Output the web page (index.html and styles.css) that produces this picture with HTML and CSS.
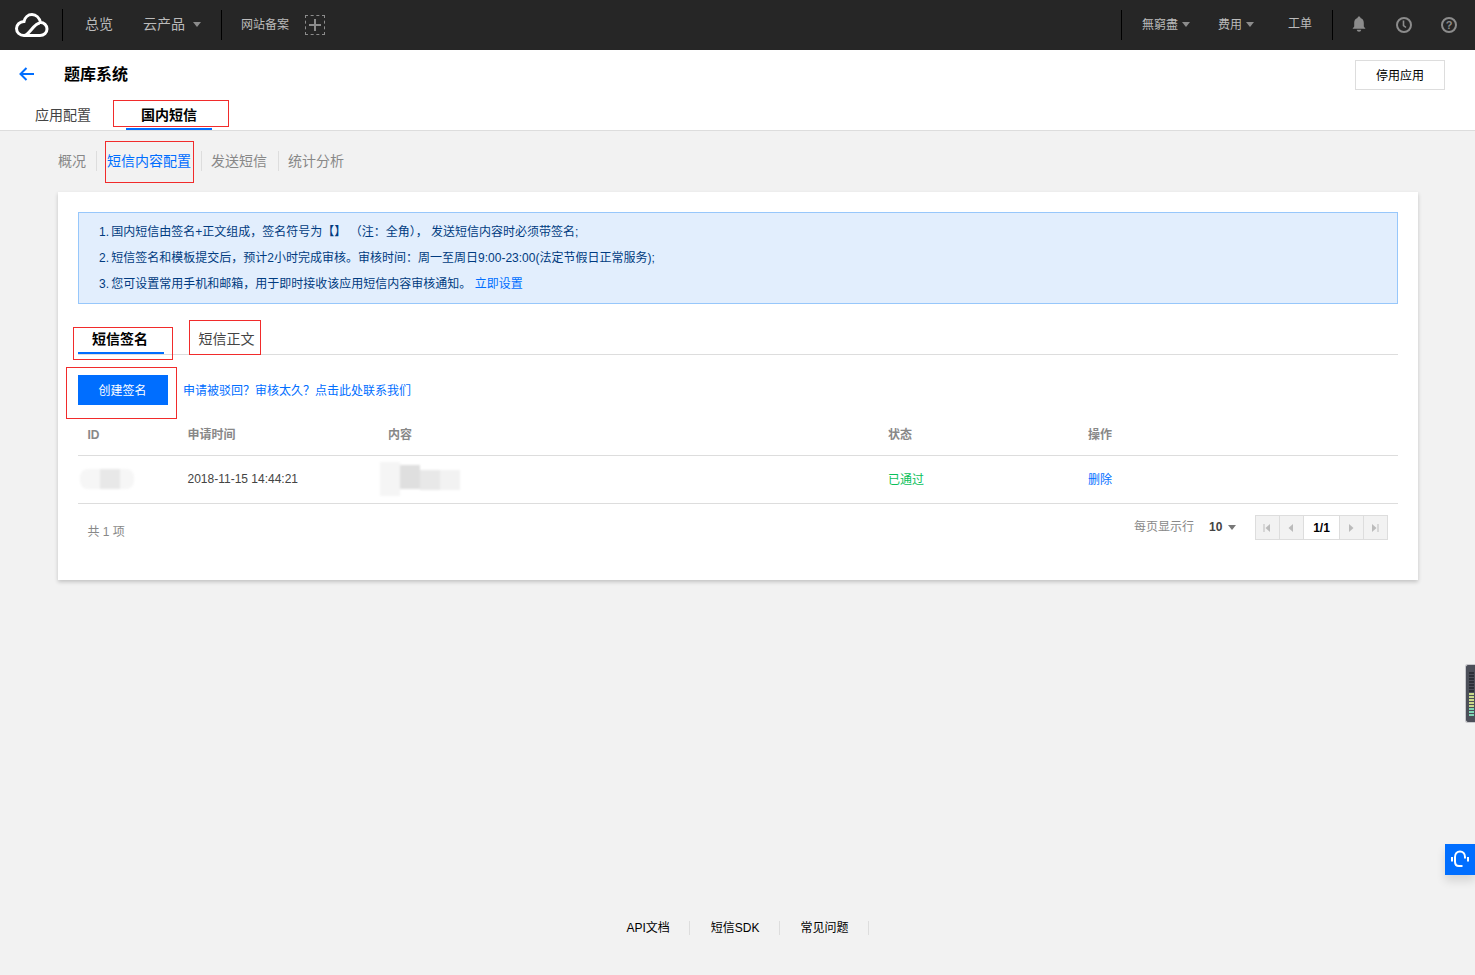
FILE: index.html
```html
<!DOCTYPE html>
<html>
  <head>
    <title>题库系统</title>
    <link rel="stylesheet" href="styles.css">
  </head>
  <body>
    <div class="topbar">
      <div class="logo-cell">
        <svg class="logo" width="34" height="24" viewBox="0 0 34 24" fill="none" stroke="#fff" stroke-width="3">
          <path d="M9 22.500H25C29 22.500 32 19.600 32 16C32 12.400 29 9.500 25.500 9.500C24.500 4.800 21 1.500 17 1.500C13 1.500 9.800 4.500 9 8.500C4.800 8.500 1.500 11.800 1.500 15.500C1.500 19.500 4.800 22.500 9 22.500C14 22.500 19 10 25 10"/>
        </svg>
      </div>
      <a class="top-link top-first">总览</a>
      <a class="top-link top-products">云产品<i class="caret"></i></a>
      <div class="top-sep"></div>
      <a class="top-link top-record">网站备案</a>
      <div class="add-box"><span class="add-h"></span><span class="add-v"></span></div>
      <div class="top-right">
        <div class="top-sep"></div>
        <a class="top-link top-user">無窮盡<i class="caret"></i></a>
        <a class="top-link top-fee">费用<i class="caret"></i></a>
        <a class="top-link top-order">工单</a>
        <div class="top-sep"></div>
        <svg class="top-icon bell" width="16" height="16" viewBox="0 0 16 16" fill="#8c8c8c">
          <path d="M8 0.500C9 0.500 9.500 1.100 9.500 2C11.800 2.700 12.800 4.500 12.800 7V10.500L14.500 12.800H1.500L3.200 10.500V7C3.200 4.500 4.200 2.700 6.500 2C6.500 1.100 7 0.500 8 0.500Z"/>
          <path d="M5.800 13.700H10.200C10.200 15 9.200 15.700 8 15.700C6.800 15.700 5.800 15 5.800 13.700Z"/>
        </svg>
        <svg class="top-icon clock" width="16" height="16" viewBox="0 0 16 16" fill="none" stroke="#8c8c8c" stroke-width="2">
          <circle cx="8" cy="8" r="7"/>
          <path d="M7.500 3.500V8.500L10 10.500" stroke-width="1.600"/>
        </svg>
        <div class="help">?</div>
      </div>
    </div>

    <div class="page-head">
      <div class="title-row">
        <svg class="back" width="16" height="14" viewBox="0 0 16 14" fill="none" stroke="#006eff" stroke-width="2">
          <path d="M15 7H2M7.500 1L1.500 7L7.500 13"/>
        </svg>
        <h1 class="app-title">题库系统</h1>
        <button class="stop-btn">停用应用</button>
      </div>
      <div class="app-tabs">
        <a class="app-tab">应用配置</a>
        <a class="app-tab active">国内短信</a>
        <span class="mark mark-app-tab"></span>
      </div>
    </div>

    <div class="main">
      <div class="subnav">
        <a class="sub-item">概况</a>
        <a class="sub-item active">短信内容配置<span class="mark mark-sub"></span></a>
        <a class="sub-item send">发送短信</a>
        <a class="sub-item">统计分析</a>
      </div>

      <div class="card">
        <div class="notice">
          <p><span class="num">1.</span> 国内短信由签名+正文组成，签名符号为【】&nbsp;（注：全角），&nbsp;发送短信内容时必须带签名;</p>
          <p><span class="num">2.</span> 短信签名和模板提交后，预计2小时完成审核。审核时间：周一至周日9:00-23:00(法定节假日正常服务);</p>
          <p><span class="num">3.</span> 您可设置常用手机和邮箱，用于即时接收该应用短信内容审核通知。 <a class="link">立即设置</a></p>
        </div>

        <div class="inner-tabs">
          <a class="inner-tab active">短信签名<span class="mark mark-sign"></span></a>
          <a class="inner-tab second">短信正文<span class="mark mark-body"></span></a>
        </div>

        <div class="actions">
          <button class="create-btn">创建签名<span class="mark mark-create"></span></button>
          <a class="link action-link">申请被驳回？审核太久？点击此处联系我们</a>
        </div>

        <div class="row head-row">
          <div class="col-id">ID</div>
          <div class="col-time">申请时间</div>
          <div class="col-content">内容</div>
          <div class="col-status">状态</div>
          <div class="col-op">操作</div>
        </div>
        <div class="row data-row">
          <div class="col-id"><div class="blur blur-id"><i></i></div></div>
          <div class="col-time">2018-11-15 14:44:21</div>
          <div class="col-content"><div class="blur blur-content"><i></i><i></i><i></i><i></i></div></div>
          <div class="col-status passed">已通过</div>
          <div class="col-op"><a class="link">删除</a></div>
        </div>

        <div class="table-foot">
          <div class="total">共 1 项</div>
          <div class="per-page">每页显示行</div>
          <div class="per-num">10<i class="caret dark"></i></div>
          <div class="pager">
            <span class="pg-btn"><svg width="8" height="8" viewBox="0 0 8 8" fill="#bbb"><path d="M0.500 0H1.500V8H0.500ZM7 0V8L2.500 4Z"/></svg></span>
            <span class="pg-btn"><svg width="8" height="8" viewBox="0 0 8 8" fill="#bbb"><path d="M6 0V8L1.500 4Z"/></svg></span>
            <span class="pg-num">1/1</span>
            <span class="pg-btn"><svg width="8" height="8" viewBox="0 0 8 8" fill="#bbb"><path d="M2 0V8L6.500 4Z"/></svg></span>
            <span class="pg-btn"><svg width="8" height="8" viewBox="0 0 8 8" fill="#bbb"><path d="M1 0V8L5.500 4ZM6.500 0H7.500V8H6.500Z"/></svg></span>
          </div>
        </div>
      </div>
    </div>

    <div class="footer">
      <a>API文档</a>
      <a>短信SDK</a>
      <a>常见问题</a>
    </div>

    <div class="meter">
      <i></i><i></i><i></i><i></i><i></i><i></i><i></i>
      <i class="yellow"></i><i class="yellow"></i><i class="yellow"></i><i class="yellow"></i><i class="yellow"></i>
      <i class="green"></i><i class="green"></i><i class="green"></i>
    </div>
    <div class="support">
      <svg width="20" height="20" viewBox="0 0 20 20" fill="none" stroke="#fff" stroke-width="2">
        <path d="M15 8.500V7C15 3.500 12.800 1.500 10 1.500C7.200 1.500 5 3.500 5 7V11.500C5 14 6.500 16 9 16H12.500"/>
        <path d="M1 7H3V11.500H1ZM17 7H19V11.500H17Z" fill="#fff" stroke="none"/>
      </svg>
    </div>
  </body>
</html>
```

FILE: styles.css
```css
* {
  box-sizing: border-box;
}
body {
  margin: 0;
  min-height: 975px;
  display: flex;
  flex-direction: column;
  background: #f2f2f2;
  color: #444;
  font-family: "Liberation Sans", "Noto Sans CJK SC", sans-serif;
  font-size: 12px;
  overflow: hidden;
}
.mark {
  position: absolute;
  border: 1px solid #f12b2b;
  pointer-events: none;
}

/* top bar */
.topbar {
  height: 50px;
  display: flex;
  align-items: center;
  background: #262626;
  color: #bbb;
  flex-shrink: 0;
}
.logo-cell {
  width: 63px;
  height: 32px;
  padding-left: 15px;
  padding-top: 4px;
  border-right: 1px solid #000;
  flex-shrink: 0;
}
.logo {
  display: block;
}
.top-link {
  padding-bottom: 4px;
  font-size: 14px;
  white-space: nowrap;
  color: #bbb;
}
.top-first {
  margin-left: 22px;
}
.top-products {
  margin-left: 30px;
  margin-right: 20px;
}
.top-record {
  margin-left: 19px;
  font-size: 12px;
}
.top-sep {
  width: 1px;
  height: 30px;
  background: #000;
  flex-shrink: 0;
}
.caret {
  display: inline-block;
  width: 0;
  height: 0;
  margin-left: 8px;
  vertical-align: 2px;
  border-top: 5px solid #8c8c8c;
  border-left: 4px solid transparent;
  border-right: 4px solid transparent;
}
.caret.dark {
  border-top-color: #777;
  margin-left: 6px;
  vertical-align: 1px;
}
.add-box {
  position: relative;
  width: 20px;
  height: 20px;
  margin-left: 16px;
  border: 1px dashed #8c8c8c;
}
.add-h,
.add-v {
  position: absolute;
  background: #8c8c8c;
}
.add-h {
  left: 3px;
  top: 8px;
  width: 12px;
  height: 2px;
}
.add-v {
  left: 8px;
  top: 3px;
  width: 2px;
  height: 12px;
}
.top-right {
  margin-left: auto;
  display: flex;
  align-items: center;
}
.top-user {
  margin-left: 20px;
  font-size: 12px;
}
.top-user .caret,
.top-fee .caret {
  margin-left: 4px;
}
.top-fee {
  margin-left: 28px;
  font-size: 12px;
}
.top-order {
  margin-left: 34px;
  margin-right: 20px;
  font-size: 12px;
  position: relative;
  top: -1px;
}
.top-icon {
  flex-shrink: 0;
}
.bell {
  margin-left: 18px;
  position: relative;
  top: -1px;
}
.clock {
  margin-left: 29px;
}
.help {
  width: 16px;
  height: 16px;
  margin-left: 29px;
  margin-right: 18px;
  border: 2px solid #8c8c8c;
  border-radius: 50%;
  color: #8c8c8c;
  font-size: 11px;
  font-weight: bold;
  line-height: 12px;
  text-align: center;
}

/* white page head */
.page-head {
  position: relative;
  height: 81px;
  background: #fff;
  border-bottom: 1px solid #ddd;
  flex-shrink: 0;
}
.title-row {
  height: 50px;
  display: flex;
  align-items: center;
  padding-left: 19px;
  padding-right: 30px;
}
.back {
  flex-shrink: 0;
  margin-bottom: 2px;
}
.app-title {
  margin: 0 0 4px 29px;
  font-size: 16px;
  font-weight: bold;
  color: #000;
}
.stop-btn {
  margin-left: auto;
  width: 90px;
  height: 30px;
  padding: 0 0 2px;
  background: #fff;
  border: 1px solid #ddd;
  color: #000;
  font: inherit;
}
.app-tabs {
  display: flex;
  padding-left: 35px;
}
.app-tab {
  font-size: 14px;
  color: #444;
  height: 30px;
  line-height: 30px;
}
.app-tab.active {
  margin-left: 35px;
  width: 86px;
  text-align: center;
  color: #000;
  font-weight: bold;
  border-bottom: 2px solid #006eff;
}
.mark-app-tab {
  left: 113px;
  top: 50px;
  width: 116px;
  height: 27px;
}

/* content */
.main {
  padding: 0 57px 0 58px;
}
.subnav {
  display: flex;
  align-items: center;
  height: 61px;
  padding-bottom: 2px;
}
.sub-item {
  position: relative;
  font-size: 14px;
  color: #888;
  padding: 0 10px;
  line-height: 20px;
  border-right: 1px solid #ddd;
}
.sub-item:first-child {
  padding-left: 0;
}
.sub-item:last-child {
  padding-left: 9px;
  border-right: 0;
}
.sub-item.active {
  color: #006eff;
}
.sub-item.send {
  padding: 0 11px 0 9px;
}
.mark-sub {
  left: 8px;
  top: -10px;
  width: 89px;
  height: 42px;
}
.card {
  height: 388px;
  padding: 20px;
  background: #fff;
  box-shadow: 0 2px 4px rgba(0, 0, 0, 0.2);
}
.notice {
  height: 92px;
  padding: 6px 20px;
  background: #e2eefd;
  border: 1px solid #97c7fb;
  color: #003b80;
}
.notice p {
  margin: 0;
  line-height: 26px;
}
.num {
  margin-right: -1px;
}
.link {
  color: #006eff;
}
.inner-tabs {
  display: flex;
  height: 51px;
  border-bottom: 1px solid #ddd;
}
.inner-tab {
  position: relative;
  width: 86px;
  height: 25px;
  margin-top: 25px;
  margin-right: 25px;
  text-align: center;
  font-size: 14px;
  line-height: 20px;
  color: #444;
}
.inner-tab.second {
  width: 75px;
}
.inner-tab.active {
  padding-right: 2px;
  color: #000;
  font-weight: bold;
  border-bottom: 2px solid #006eff;
}
.mark-sign {
  left: -5px;
  top: -2px;
  width: 100px;
  height: 33px;
}
.mark-body {
  left: 0;
  top: -9px;
  width: 72px;
  height: 35px;
}
.actions {
  display: flex;
  align-items: center;
  height: 30px;
  margin-top: 20px;
}
.create-btn {
  position: relative;
  width: 90px;
  height: 30px;
  margin-right: 15px;
  padding: 0 1px 2px 0;
  background: #006eff;
  border: 0;
  color: #fff;
  font: inherit;
}
.mark-create {
  left: -12px;
  top: -8px;
  width: 111px;
  height: 52px;
}
.action-link {
  padding-bottom: 2px;
}
.row {
  display: flex;
  align-items: center;
  border-bottom: 1px solid #ddd;
}
.head-row {
  height: 51px;
  padding-top: 6px;
  color: #888;
  font-weight: bold;
}
.head-row .col-id {
  padding-top: 4px;
}
.data-row {
  height: 48px;
  padding-bottom: 2px;
  color: #444;
}
.col-id {
  width: 100px;
  padding-left: 9.5px;
}
.col-time {
  width: 200px;
  padding-left: 9.5px;
}
.col-content {
  width: 500px;
  padding-left: 10px;
}
.col-status {
  width: 200px;
  padding-left: 10px;
}
.col-op {
  padding-left: 10px;
}
.passed {
  color: #0abf5b;
}
.blur {
  display: flex;
  filter: blur(0.8px);
}
.blur-id {
  width: 54px;
  height: 20px;
  margin-left: -7.5px;
  border-radius: 8px;
  background: #f6f6f6;
}
.blur-id i {
  width: 20px;
  margin-left: 20px;
  background: #e8e8e8;
}
.blur-content {
  width: 80px;
  height: 34px;
  margin-left: -8px;
  align-items: flex-start;
  border-radius: 0 8px 8px 0;
}
.blur-content i {
  width: 20px;
  height: 20px;
  margin-top: 8px;
  background: #f2f2f2;
}
.blur-content i:nth-child(1) {
  height: 34px;
  margin-top: 0;
  background: #f5f5f5;
}
.blur-content i:nth-child(2) {
  height: 24px;
  margin-top: 3px;
  background: #dfdfdf;
}
.blur-content i:nth-child(3) {
  background: #e8e8e8;
}
.table-foot {
  display: flex;
  align-items: flex-start;
  padding: 11px 10px 0 9.5px;
}
.total {
  margin-top: 7px;
  color: #888;
}
.per-page {
  margin-left: auto;
  margin-top: 2px;
  color: #888;
}
.per-num {
  width: 46px;
  margin-left: 15px;
  margin-top: 5px;
  font-weight: bold;
  color: #444;
}
.pager {
  display: flex;
  height: 25px;
  border: 1px solid #ddd;
}
.pg-btn {
  display: flex;
  align-items: center;
  justify-content: center;
  width: 24px;
  padding-right: 2px;
  background: #f2f2f2;
  border-right: 1px solid #ddd;
}
.pg-btn:last-child {
  width: 23px;
  border-right: 0;
}
.pg-num {
  width: 36px;
  border-right: 1px solid #ddd;
  color: #000;
  font-weight: bold;
  line-height: 24px;
  text-align: center;
}

/* footer */
.footer {
  margin-top: auto;
  margin-bottom: 40px;
  display: flex;
  justify-content: center;
  color: #000;
  padding-right: 1px;
}
.footer a {
  padding: 0 19px 0 21px;
  border-right: 1px solid #ddd;
  line-height: 14px;
}

/* floating widgets */
.meter {
  position: fixed;
  right: 0;
  top: 664px;
  width: 10px;
  height: 59px;
  padding: 7px 1px 0 3px;
  display: flex;
  flex-direction: column;
  gap: 1px;
  background: #4c4f59;
  border-radius: 3px 0 0 3px;
  border: 1px solid #c8c8cc;
  border-right: 0;
}
.meter i {
  display: block;
  height: 2px;
  background: #2d3038;
}
.meter .yellow {
  background: #c9d98a;
}
.meter .green {
  background: #7fd6b5;
}
.support {
  position: fixed;
  right: 0;
  top: 844px;
  width: 30px;
  height: 31px;
  display: flex;
  align-items: center;
  justify-content: center;
  background: #006eff;
  box-shadow: 0 6px 10px rgba(0, 0, 0, 0.12);
}
```
